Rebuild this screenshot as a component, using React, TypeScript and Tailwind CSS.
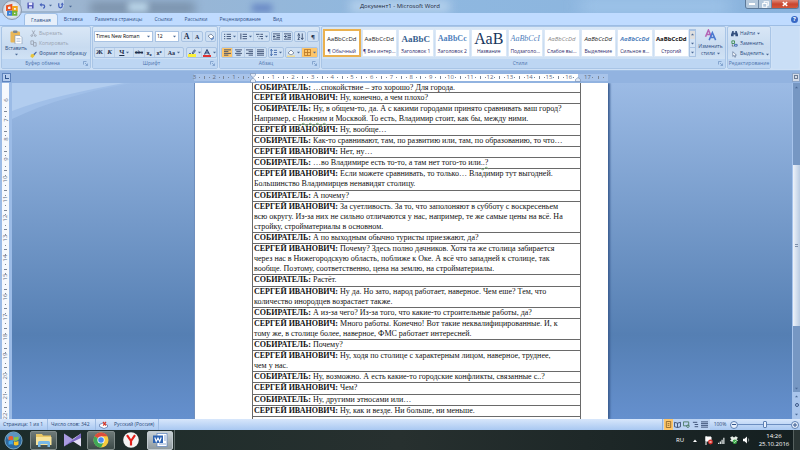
import type { ReactNode } from "react";
import clsx from "clsx";

type Row = { who: string; lines: ReactNode[]; loose?: boolean };

const A = "СОБИРАТЕЛЬ:";
const B = "СЕРГЕЙ ИВАНОВИЧ:";

const spell = "underline decoration-wavy decoration-[#7fb77f] decoration-1";

const rows: Row[] = [
  { who: A, lines: ["…спокойствие – это хорошо? Для города."] },
  { who: B, lines: ["Ну, конечно, а чем плохо?"] },
  {
    who: A,
    lines: [
      "Ну, в общем-то, да. А с какими городами принято сравнивать ваш город?",
      <>Например, с <span className={spell}>Нижним</span> и Москвой. То есть, Владимир стоит, как бы, между ними.</>,
    ],
  },
  { who: B, lines: ["Ну, вообще…"] },
  { who: A, lines: ["Как-то сравнивают, там, по развитию или, там, по образованию, то что…"] },
  { who: B, lines: ["Нет, ну…"] },
  { who: A, lines: [<>…во Владимире есть то-то, а там нет того-то или<span className={spell}>..?</span></>] },
  {
    who: B,
    lines: [
      "Если можете сравнивать, то только… Владимир тут выгодней.",
      "Большинство Владимирцев ненавидят столицу.",
    ],
    loose: true,
  },
  { who: A, lines: ["А почему?"] },
  {
    who: B,
    lines: [
      "За суетливость. За то, что заполоняют в субботу с воскресеньем",
      "всю округу. Из-за них не сильно отличаются у нас, например, те же самые цены на всё. На",
      "стройку, стройматериалы в основном.",
    ],
  },
  { who: A, lines: ["А по выходным обычно туристы приезжают, да?"] },
  {
    who: B,
    lines: [
      "Почему? Здесь полно дачников. Хотя та же столица забирается",
      "через нас в Нижегородскую область, поближе к Оке. А всё что западней к столице, так",
      "вообще. Поэтому, соответственно, цена на землю, на стройматериалы.",
    ],
  },
  { who: A, lines: ["Растёт."], loose: true },
  {
    who: B,
    lines: ["Ну да. Но зато, народ работает, наверное. Чем еше? Тем, что", "количество инородцев возрастает также."],
  },
  { who: A, lines: ["А из-за чего? Из-за того, что какие-то строительные работы, да?"] },
  {
    who: B,
    lines: [
      "Много работы. Конечно! Вот такие неквалифицированные. И, к",
      "тому же, в столице более, наверное, ФМС работает интересней.",
    ],
  },
  { who: A, lines: ["Почему?"] },
  {
    who: B,
    lines: ["Ну, ходя по столице с характерным лицом, наверное, труднее,", "чем у нас."],
  },
  { who: A, lines: ["Ну, возможно. А есть какие-то городские конфликты, связанные с..?"] },
  { who: B, lines: ["Чем?"], loose: true },
  { who: A, lines: ["Ну, другими этносами или…"] },
  { who: B, lines: ["Ну, как и везде. Ни больше, ни меньше."] },
];

const tabs = ["Главная", "Вставка", "Разметка страницы", "Ссылки", "Рассылки", "Рецензирование", "Вид"];

const styles = [
  { name: "¶ Обычный", sample: "AaBbCcDd", cls: "text-[6px] text-[#222]" },
  { name: "¶ Без интер...", sample: "AaBbCcDd", cls: "text-[6px] text-[#222]" },
  { name: "Заголовок 1", sample: "AaBbC", cls: "font-['Liberation_Serif'] font-bold text-[9px] text-[#37608f]" },
  { name: "Заголовок 2", sample: "AaBbCc", cls: "font-['Liberation_Serif'] font-bold text-[8px] text-[#4f81bd]" },
  { name: "Название", sample: "АаВ", cls: "font-['Liberation_Serif'] text-[16px] text-[#17365d]" },
  { name: "Подзаголо...", sample: "AaBbCcI", cls: "font-['Liberation_Serif'] italic text-[8px] text-[#4f81bd]" },
  { name: "Слабое вы...", sample: "AaBbCcDd", cls: "italic text-[6px] text-[#8a8a8a]" },
  { name: "Выделение", sample: "AaBbCcDd", cls: "italic text-[6px] text-[#222]" },
  { name: "Сильное в...", sample: "AaBbCcDd", cls: "italic font-bold text-[6px] text-[#4f81bd]" },
  { name: "Строгий", sample: "AaBbCcDd", cls: "font-bold text-[6px] text-[#111]" },
];

function Caret() {
  return (
    <svg viewBox="0 0 4 4" className="w-[3px] h-[3px] shrink-0" fill="#4b6a97">
      <path d="M0 1h4L2 3.4z" />
    </svg>
  );
}

function Group({ title, className, launcher = true, children }: { title: string; className?: string; launcher?: boolean; children: ReactNode }) {
  return (
    <section className={clsx("flex flex-col rounded-[2px] border border-[#a9c5e6] bg-linear-to-b from-[#d9e7f6] via-[#c8dbf0] to-[#d6e7f8]", className)}>
      <div className="flex-1 flex min-h-0">{children}</div>
      <div className="h-[9px] flex items-center bg-[#bdd6f3] text-[#4d74ad]">
        <h2 className="flex-1 text-center leading-[9px]">{title}</h2>
        {launcher && (
          <button aria-label={title} className="mr-[2px]">
            <svg viewBox="0 0 5 5" className="w-[5px] h-[5px]" fill="none" stroke="#6d90c0" strokeWidth=".7">
              <path d="M.5 3.5V.5h3M2 2l2.3 2.3M4.5 2.5v2h-2" />
            </svg>
          </button>
        )}
      </div>
    </section>
  );
}

function Bar({ className, children }: { className?: string; children: ReactNode }) {
  return (
    <div className={clsx("h-[11px] flex items-center rounded-[2px] border border-[#a9c3e3] bg-[#cfe0f3] divide-x divide-[#b9cfe9]", className)}>
      {children}
    </div>
  );
}

function Tool({ label, className, caret, active, children }: { label: string; className?: string; caret?: boolean; active?: boolean; children: ReactNode }) {
  return (
    <button
      aria-label={label}
      className={clsx("h-full flex-1 flex items-center justify-center gap-[2px] leading-none text-[#1e2f4d]", active && "bg-[#fdc66b]", className)}
    >
      {children}
      {caret && <Caret />}
    </button>
  );
}

function Lines({ d, color = "#33476b" }: { d: string; color?: string }) {
  return (
    <svg viewBox="0 0 8 8" className="w-[7px] h-[7px] shrink-0" fill="none" stroke={color} strokeWidth="1">
      <path d={d} />
    </svg>
  );
}

function TitleBar() {
  return (
    <header className="relative h-[13px] shrink-0 flex items-start bg-linear-to-r from-[#9fb4cc] via-[#8fb8e0] to-[#8ab3dd]">
      <div className="absolute inset-0 overflow-hidden">
        <div className="absolute left-[90px] top-[2px] w-[105px] h-[12px] bg-[#66798f] blur-[5px] opacity-60" />
        <div className="absolute left-[252px] top-[4px] w-[20px] h-[8px] bg-[#5675bd] blur-[3px] opacity-70" />
        <div className="absolute left-[128px] top-[2px] w-[20px] h-[10px] bg-[#b9d4e8] blur-[3px]" />
        <div className="absolute left-[350px] top-0 w-[100px] h-[13px] bg-[#b4d0ec] blur-[5px]" />
        <div className="absolute left-[580px] top-0 w-[150px] h-[13px] bg-[#a4c8ec] blur-[8px]" />
      </div>
      <div className="relative ml-[21px] h-[11px] w-[43px] pl-[6px] flex items-center gap-[5px] rounded-br-[6px] bg-[#bdd0e8]">
        <button aria-label="Сохранить">
          <svg viewBox="0 0 8 8" className="w-[7px] h-[7px]">
            <rect x=".5" y=".5" width="7" height="7" rx=".6" fill="#4b53b5" />
            <rect x="2" y=".6" width="4" height="3" fill="#eef" />
            <rect x="2.3" y="5" width="3.4" height="2.5" fill="#cfd6f4" />
          </svg>
        </button>
        <button aria-label="Отменить" className="flex items-center gap-[3px]">
          <svg viewBox="0 0 8 8" className="w-[7px] h-[7px]" fill="none" stroke="#4561ba" strokeWidth="1.4">
            <path d="M2 3.2h2.6a1.9 1.9 0 0 1 0 3.8" />
            <path d="M3 .8 .6 3.2 3 5.4z" fill="#4561ba" stroke="none" />
          </svg>
          <Caret />
        </button>
        <button aria-label="Повторить">
          <svg viewBox="0 0 8 8" className="w-[7px] h-[7px]" fill="none" stroke="#4561ba" strokeWidth="1.4">
            <path d="M2 1.5v3.2a2 2 0 0 0 4 0V2.5" />
            <path d="M4.2 3 6 .7 7.8 3z" fill="#4561ba" stroke="none" />
          </svg>
        </button>
      </div>
      <button aria-label="Настройка панели" className="relative ml-[5px] mt-[5px]">
        <Caret />
      </button>
      <h1 className="absolute inset-x-0 top-[1px] text-center text-[6px] leading-[11px] text-[#1d2a3a]">Документ1 - Microsoft Word</h1>
      <div className="relative ml-auto mr-[1px] h-[9px] flex rounded-b-[3px] overflow-hidden border border-t-0 border-[#5c7897] divide-x divide-[#6d88a6]">
        <button aria-label="Свернуть" className="w-[13px] flex items-center justify-center bg-[#b4c8dc]">
          <span className="w-[6px] h-[2px] bg-white" />
        </button>
        <button aria-label="Окно" className="w-[13px] flex items-center justify-center bg-[#b4c8dc]">
          <svg viewBox="0 0 8 8" className="w-[7px] h-[7px]" fill="none" stroke="#fff" strokeWidth="1.2">
            <path d="M2.5 2.5V.8h4.7v4H5.8M.8 2.8h4.6v4.4H.8z" />
          </svg>
        </button>
        <button aria-label="Закрыть" className="w-[26px] flex items-center justify-center bg-linear-to-b from-[#dd8a79] via-[#c9452f] to-[#d2573a]">
          <svg viewBox="0 0 8 8" className="w-[6px] h-[6px]" stroke="#fff" strokeWidth="1.8">
            <path d="m1 1.5 6 5M7 1.5l-6 5" />
          </svg>
        </button>
      </div>
      <button aria-label="Кнопка Office" className="absolute z-10 left-[2px] top-0 size-[20px] rounded-full border border-[#8a97ab] bg-radial from-white via-[#e3e8f0] to-[#a7b6cc] flex items-center justify-center">
        <svg viewBox="0 0 14 14" className="w-[14px] h-[14px]" fill="none" strokeWidth="1.9">
          <path d="M2 3.2 6.4 2v4.7L2 7z" stroke="#e8501f" />
          <path d="M8 4h3.8v3.7H8z" stroke="#f4a51d" />
          <path d="M3 8.8h3.4v3H3z" stroke="#3a7fd5" />
          <path d="M8 8.7h3.4v3.2H8z" stroke="#6eb43a" />
        </svg>
      </button>
    </header>
  );
}

function Ribbon() {
  return (
    <div className="shrink-0 bg-[#bfdbff] text-[5px]">
      <nav className="h-[12px] pl-[24px] pr-[2px] flex items-end text-[#2f4f85]">
        {tabs.map((t, i) => (
          <button key={t} className={clsx("h-[12px] px-[6px] leading-[12px] whitespace-nowrap", i === 0 && "rounded-t-[3px] border border-b-0 border-[#9fbfe6] bg-[#e6effa]")}>
            {t}
          </button>
        ))}
        <button aria-label="Справка" className="ml-auto mb-[2px] size-[7px] rounded-full bg-[#3767c4] text-white font-bold text-[6px] leading-[7px]">?</button>
      </nav>
      <div className="h-[46px] px-[1px] pb-[1px] flex gap-[1px] bg-[#cfe1f6] border-y border-[#9dbde4]">
        <Group title="Буфер обмена" className="w-[90px]">
          <button className="w-[28px] pt-[3px] flex flex-col items-center text-[#2b4b80]">
            <svg viewBox="0 0 14 14" className="w-[14px] h-[14px]">
              <rect x="1.5" y="1.5" width="9.5" height="11" rx="1" fill="#e9b758" />
              <rect x="4" y=".5" width="4.5" height="2.4" rx="1" fill="#7b8794" />
              <path d="M6 5.5h5l2 2V14H6z" fill="#fff" stroke="#7d93b3" strokeWidth=".6" />
              <path d="M7.5 8.5h4M7.5 10h4M7.5 11.5h4" stroke="#9db2d0" strokeWidth=".6" />
            </svg>
            <span className="leading-[9px]">Вставить</span>
            <Caret />
          </button>
          <div className="pt-[2px] flex flex-col text-[#9aa4b2]">
            <button disabled className="h-[10px] flex items-center gap-[2px]">
              <Lines d="M2.5.5 5 5.2M5.5.5 3 5.2M2 5.5a1 1 0 1 0 .1 0M6 5.5a1 1 0 1 0 .1 0" color="#9aa4b2" />
              Вырезать
            </button>
            <button disabled className="h-[11px] flex items-center gap-[2px]">
              <Lines d="M1 1h3v4H1zM4 3h3v4H4z" color="#9aa4b2" />
              Копировать
            </button>
            <button className="h-[10px] flex items-center gap-[2px] text-[#2b4b80] whitespace-nowrap">
              <svg viewBox="0 0 8 8" className="w-[7px] h-[7px]">
                <path d="M1 4 4 3l1.5 2L3 8 .5 6.5z" fill="#e8c43c" />
                <path d="M4 3.5 7 .6l.8.8L5 4.8z" fill="#4263a5" />
              </svg>
              Формат по образцу
            </button>
          </div>
        </Group>

        <Group title="Шрифт" className="w-[126px]">
          <div className="flex-1 px-[1px] pt-[4px] flex flex-col gap-[5px]">
            <div className="flex gap-[2px]">
              <div className="w-[59px] h-[11px] flex items-center pr-[2px] border border-[#a9c3e3] bg-white">
                <input aria-label="Шрифт" defaultValue="Times New Roman" className="w-full min-w-0 pl-[1px] leading-[9px] text-black outline-none" />
                <Caret />
              </div>
              <div className="w-[24px] h-[11px] flex items-center pr-[2px] border border-[#a9c3e3] bg-white">
                <input aria-label="Размер шрифта" defaultValue="12" className="w-full min-w-0 pl-[1px] leading-[9px] text-black outline-none" />
                <Caret />
              </div>
              <Bar className="w-[22px]">
                <Tool label="Увеличить размер"><span className="font-['Liberation_Serif'] font-bold text-[8px]">A</span></Tool>
                <Tool label="Уменьшить размер"><span className="font-['Liberation_Serif'] font-bold text-[6px]">A</span></Tool>
              </Bar>
              <Bar className="w-[11px]">
                <Tool label="Очистить формат">
                  <svg viewBox="0 0 8 8" className="w-[8px] h-[8px]">
                    <path d="m1 3 3-2 3 3-3 2z" fill="#fff" stroke="#5d6d88" strokeWidth=".7" />
                    <path d="m4 6 3-2v1.5L4.5 7.5z" fill="#5f86c5" />
                  </svg>
                </Tool>
              </Bar>
            </div>
            <div className="flex gap-[2px]">
              <Bar className="w-[90px] font-['Liberation_Serif'] text-[7px]">
                <Tool label="Полужирный"><b>Ж</b></Tool>
                <Tool label="Курсив"><b className="italic">К</b></Tool>
                <Tool label="Подчеркнутый" caret className="grow-[2]"><b className="underline">Ч</b></Tool>
                <Tool label="Зачеркнутый"><s className="font-['Roboto'] text-[5px]">abc</s></Tool>
                <Tool label="Подстрочный"><b className="font-['Roboto'] text-[6px]">x₂</b></Tool>
                <Tool label="Надстрочный"><b className="font-['Roboto'] text-[6px]">x²</b></Tool>
                <Tool label="Регистр" caret className="grow-[2]"><b className="text-[6px]">Aa</b></Tool>
              </Bar>
              <Bar className="w-[31px]">
                <Tool label="Выделение цветом" caret>
                  <svg viewBox="0 0 8 8" className="w-[8px] h-[8px]">
                    <rect y="5" width="8" height="3" fill="#fbf03a" />
                    <path d="M1 4.5h2M4 4 6.5.8l1 .8L5 5z" stroke="#42597f" strokeWidth=".8" fill="#8ba2c6" />
                  </svg>
                </Tool>
                <Tool label="Цвет текста" caret>
                  <svg viewBox="0 0 8 8" className="w-[8px] h-[8px]">
                    <rect y="6" width="8" height="2" fill="#e03131" />
                    <path d="M1.5 5.5 4 .8l2.5 4.7M2.5 4h3" stroke="#2e4576" strokeWidth="1.1" fill="none" />
                  </svg>
                </Tool>
              </Bar>
            </div>
          </div>
        </Group>

        <Group title="Абзац" className="w-[101px]">
          <div className="flex-1 px-[1px] pt-[4px] flex flex-col gap-[5px]">
            <div className="flex gap-[1px]">
              <Bar className="w-[49px]">
                <Tool label="Маркеры" caret><Lines d="M0 1.5h1.4M3 1.5h5M0 4h1.4M3 4h5M0 6.5h1.4M3 6.5h5" /></Tool>
                <Tool label="Нумерация" caret><Lines d="M1 .5v6.8M3 1.5h5M3 4h5M3 6.5h5" /></Tool>
                <Tool label="Многоуровневый список" caret><Lines d="M0 1.5h4M5 1.5h3M1.5 4h1M4 4h4M3 6.5h1M5.5 6.5H8" /></Tool>
              </Bar>
              <Bar className="w-[22px]">
                <Tool label="Уменьшить отступ"><Lines d="M0 1h8M4 3h4M4 5h4M0 7h8M3 4H0M1.5 2.5 0 4l1.5 1.5" /></Tool>
                <Tool label="Увеличить отступ"><Lines d="M0 1h8M4 3h4M4 5h4M0 7h8M0 4h3M1.5 2.5 3 4 1.5 5.5" /></Tool>
              </Bar>
              <Bar className="w-[12px]">
                <Tool label="Сортировка"><Lines d="M1 3.5 2 .5l1 3M1 4.5h2L1 7.5h2M6 .5v7M4.5 5.5 6 7.4l1.5-1.9" /></Tool>
              </Bar>
              <Bar className="w-[12px]"><Tool label="Отобразить знаки"><b className="text-[6px]">¶</b></Tool></Bar>
            </div>
            <div className="flex gap-[1px]">
              <Bar className="w-[46px]">
                <Tool label="По левому краю" active><Lines d="M0 1h8M0 3h5M0 5h8M0 7h5" /></Tool>
                <Tool label="По центру"><Lines d="M0 1h8M1.5 3h5M0 5h8M1.5 7h5" /></Tool>
                <Tool label="По правому краю"><Lines d="M0 1h8M3 3h5M0 5h8M3 7h5" /></Tool>
                <Tool label="По ширине"><Lines d="M0 1h8M0 3h8M0 5h8M0 7h8" /></Tool>
              </Bar>
              <Bar className="w-[16px]">
                <Tool label="Интервал" caret><Lines d="M1.5 0v8M0 2 1.5.4 3 2M0 6l1.5 1.6L3 6M4.5 1.5H8M4.5 4H8M4.5 6.5H8" color="#3c63a8" /></Tool>
              </Bar>
              <Bar className="w-[33px]">
                <Tool label="Заливка" caret>
                  <svg viewBox="0 0 8 8" className="w-[8px] h-[8px]">
                    <path d="m1 4 3-3 3 3-3 2z" fill="#fff" stroke="#5d6d88" strokeWidth=".7" />
                    <rect y="6.5" width="8" height="1.5" fill="#f0dc95" />
                  </svg>
                </Tool>
                <Tool label="Границы" caret active><Lines d="M.5.5h7v7h-7zM4 .5v7M.5 4h7" color="#b7782a" /></Tool>
              </Bar>
            </div>
          </div>
        </Group>

        <Group title="Стили" className="flex-1 min-w-0">
          <div className="flex-1 min-w-0 py-[2px] pl-[1px] flex">
            <div className="flex-1 min-w-0 flex gap-[1px]">
              {styles.map((s, i) => (
                <button
                  key={s.name}
                  className={clsx("flex-1 min-w-0 flex flex-col overflow-hidden bg-white border", i === 0 ? "border-2 border-[#eab150] pt-0" : "border-[#dbe8f7] pt-[1px]")}
                >
                  <span className={clsx("h-[16px] w-full flex items-center justify-center whitespace-nowrap leading-none", s.cls)}>{s.sample}</span>
                  <span className="w-full flex justify-center whitespace-nowrap leading-[8px] text-[#2c2c6c]">{s.name}</span>
                </button>
              ))}
            </div>
            <div className="w-[7px] flex flex-col divide-y divide-[#a9c3e3] border border-[#a9c3e3] bg-[#d3e3f5]">
              <button aria-label="Вверх" className="flex-1 flex items-center justify-center rotate-180 bg-[#dedede]"><Caret /></button>
              <button aria-label="Вниз" className="flex-1 flex items-center justify-center"><Caret /></button>
              <button aria-label="Дополнительно" className="flex-1 flex items-center justify-center"><Caret /></button>
            </div>
            <button className="w-[29px] flex flex-col items-center text-[#2b4b80]">
              <svg viewBox="0 0 14 14" className="w-[13px] h-[14px]" fill="none" strokeWidth="1.8">
                <path d="M1.2 9 4.6 1.2 8 9M2.4 6.5h4.4" stroke="#b565b5" />
                <path d="M5.4 13 9.2 4.2 13 13M6.8 10h4.8" stroke="#4a78cf" />
              </svg>
              <span className="mt-[2px] leading-[7px]">Изменить</span>
              <span className="leading-[7px] flex items-center gap-[2px]">стили<Caret /></span>
            </button>
          </div>
        </Group>

        <Group title="Редактирование" launcher={false} className="w-[44px]">
          <div className="pt-[2px] pl-[3px] flex flex-col text-[#2b4b80]">
            <button className="h-[10px] flex items-center gap-[2px]">
              <svg viewBox="0 0 8 8" className="w-[7px] h-[7px]" fill="#34507f">
                <path d="M1.5 1h1.6v2h1.8V1h1.6L8 5v2H5V5H3v2H0V5z" />
              </svg>
              Найти <Caret />
            </button>
            <button className="h-[11px] flex items-center gap-[2px]">
              <svg viewBox="0 0 8 8" className="w-[7px] h-[7px]" fill="none">
                <path d="M1 4V1h3v3z" stroke="#3a8a4d" /><path d="M4 7V5h3v2z" stroke="#3a62ad" /><path d="M1.5 5v2H3" stroke="#444" strokeWidth=".7" />
              </svg>
              Заменить
            </button>
            <button className="h-[10px] flex items-center gap-[2px]">
              <svg viewBox="0 0 8 8" className="w-[7px] h-[7px]" fill="#fff" stroke="#53698f" strokeWidth=".7">
                <path d="M2 .8v5.4l1.4-1.2 1 2.2 1-.5-1-2.1h1.8z" />
              </svg>
              Выделить <Caret />
            </button>
          </div>
        </Group>
        <div className="w-[27px] rounded-[2px] bg-[#c9def6]" />
      </div>
    </div>
  );
}

function Cell({ n, half }: { n: string | number; half?: boolean }) {
  return (
    <div className={clsx("basis-0 min-w-0 flex items-center justify-between", half ? "grow" : "grow-2")}>
      <span className="w-px flex justify-center">{n}</span>
      <span className="w-px h-px bg-[#7c8797]" />
      {!half && <span className="w-px h-[3px] bg-[#7c8797]" />}
      {!half && <span className="w-px h-px bg-[#7c8797]" />}
      <span />
    </div>
  );
}

function Rulers() {
  return (
    <div className="h-[12px] shrink-0 flex items-center bg-[#92b3e0]">
      <button aria-label="Табуляция" className="ml-[2px] size-[9px] border border-[#5e84bd] bg-[#b5cdee] flex items-center justify-center">
        <span className="w-[4px] h-[4px] border-l border-b border-[#31568f]" />
      </button>
      <div className="flex-1 flex justify-center pr-[1px]">
        <div className="relative w-[414px] h-[7px] flex text-[6px] leading-[7px] text-[#5d6a7e]">
          <div className="w-[59px] flex bg-[#a9c4ea]">
            {[3, 2, 1].map((n) => <Cell key={n} n={n} />)}
          </div>
          <div className="w-[325px] flex bg-white">
            {Array.from({ length: 17 }, (_, i) => <Cell key={i} n={i || ""} half={i === 16} />)}
          </div>
          <div className="flex-1 pl-[9px] flex bg-[#a9c4ea]">
            <Cell n={17} />
          </div>
          <svg viewBox="0 0 6 10" className="absolute left-[56px] top-[-1px] w-[6px] h-[10px]" fill="#dfe9f7" stroke="#6b86ad" strokeWidth=".6">
            <path d="M.5.5h5v1.8L3 4.6.5 2.3zM3 5l2.5 2v2.5h-5V7z" />
          </svg>
          <svg viewBox="0 0 6 5" className="absolute left-[381px] top-[3px] w-[6px] h-[5px]" fill="#dfe9f7" stroke="#6b86ad" strokeWidth=".6">
            <path d="m3 .5 2.5 2v2h-5v-2z" />
          </svg>
        </div>
      </div>
      <button aria-label="Линейка" className="w-[8px] h-[9px] border border-[#8ba5c8] bg-[#d5dce8] flex items-center justify-center">
        <span className="size-[4px] border border-[#6d7d96]" />
      </button>
    </div>
  );
}

function Workspace() {
  return (
    <div className="relative flex-1 min-h-0 overflow-hidden flex bg-linear-to-b from-[#9cbbe5] via-[#557fb3] via-75% to-[#6590ce]">
      <svg viewBox="0 0 120 36" className="absolute left-[12px] top-0 w-[120px] h-[36px]">
        <path d="M0 0h120C75 8 35 19 0 36z" fill="#a0bfe8" />
        <path d="M0 0h112C70 8 30 16 0 28z" fill="#b2cdef" />
      </svg>
      <div className="relative w-[12px] pl-[2px] bg-[#9bbbe6] overflow-hidden">
        <div className="w-[7px] h-full pt-[14px] flex flex-col items-center bg-[#f6f9fd] text-[6px] text-[#5d6a7e]">
          {Array.from({ length: 17 }, (_, i) => (
            <div key={i} className={clsx("basis-0 min-h-0 flex flex-col items-center justify-between leading-[6px]", i === 16 ? "grow" : "grow-3")}>
              <span className="-rotate-90 h-[6px]">{i + 6}</span>
              {i < 16 && <span className="h-px w-px bg-[#7c8797]" />}
              {i < 16 && <span className="h-px w-[3px] bg-[#7c8797]" />}
              {i < 16 && <span className="h-px w-px bg-[#7c8797]" />}
            </div>
          ))}
        </div>
      </div>
      <main className="relative flex-1 min-w-0 flex justify-center pr-[2px]">
        <div className="w-[414px] pl-[57px] pr-[27px] bg-white border-l border-[#6f8fbd] shadow-[2px_0_2px_#3d5f92]">
          <table className="w-full border-collapse font-['Liberation_Serif',serif] text-[8px] text-[#111]">
            <tbody>
              {rows.map((r, i) => (
                <tr key={i}>
                  <td
                    className={clsx(
                      "px-[1px] border border-[#6a6a6a] whitespace-nowrap",
                      i === 0 ? "border-t-0 leading-[9px]" : "leading-[10px]",
                      r.loose && "pb-[1px]",
                    )}
                  >
                    {r.lines.map((line, j) => (
                      <p key={j}>
                        {j === 0 && <b>{r.who} </b>}
                        {line}
                      </p>
                    ))}
                  </td>
                </tr>
              ))}
              <tr>
                <td className="h-[12px] border-x border-[#6a6a6a]" />
              </tr>
            </tbody>
          </table>
        </div>
      </main>
      <div className="relative w-[8px] flex flex-col items-center bg-[#7697c3] border-l border-[#a7c4ec]">
        <button aria-label="Прокрутить вверх" className="h-[9px] flex items-center rotate-180"><Caret /></button>
        <div className="grow-[73] basis-0" />
        <div className="grow-[162] basis-0 w-full flex flex-col items-center justify-center gap-px bg-linear-to-r from-[#eef3fa] to-[#b9cbe2]">
          <span className="w-[3px] h-px bg-[#7d90ab]" />
          <span className="w-[3px] h-px bg-[#7d90ab]" />
        </div>
        <div className="grow-[58] basis-0" />
        <button aria-label="Прокрутить вниз" className="h-[8px] flex items-center"><Caret /></button>
        <div className="h-[27px] w-full flex flex-col items-center justify-around bg-[#a9c5ec]">
          <button aria-label="Назад" className="rotate-180"><Caret /></button>
          <button aria-label="Объект перехода" className="size-[4px] rounded-full border border-[#3c5888]" />
          <button aria-label="Далее"><Caret /></button>
        </div>
      </div>
    </div>
  );
}

function StatusBar() {
  return (
    <footer className="h-[11px] shrink-0 flex items-center bg-linear-to-b from-[#d8e7fb] to-[#a9c8f1] text-[5px] leading-[11px] text-[#2a4878]">
      <span className="w-[48px] pl-[3px] whitespace-nowrap border-r border-[#9dbbe3]">Страница: 1 из 1</span>
      <span className="w-[48px] pl-[3px] whitespace-nowrap border-r border-[#9dbbe3]">Число слов: 342</span>
      <button aria-label="Правописание" className="w-[15px] flex justify-center">
        <svg viewBox="0 0 9 8" className="w-[9px] h-[8px]">
          <path d="M.5 3.5 4 2l4.5 2v2L5 7.5.5 5.5z" fill="#fff" stroke="#5270a6" strokeWidth=".7" />
          <path d="m4 1 3 3.5M7 .8 4.2 4.6" stroke="#d93a2b" strokeWidth="1.2" />
        </svg>
      </button>
      <button className="w-[48px] pl-[3px] text-left whitespace-nowrap border-r border-[#9dbbe3]">Русский (Россия)</button>
      <div className="ml-auto w-[48px] h-full px-[1px] flex items-center bg-[#bcd3f2] border-l border-[#8fb0de]">
        <Tool label="Разметка страницы" active><Lines d="M1.5 .5h5v7h-5zM3 3h2M3 5h2" color="#8a6429" /></Tool>
        <Tool label="Режим чтения"><Lines d="M.5 1.5 4 2.5l3.5-1v5L4 7.5.5 6.5zM4 2.5v5" /></Tool>
        <Tool label="Веб-документ"><Lines d="M.5 1h6v4.5h-6zM5.5 4.5a1.5 1.5 0 1 0 .1 0" color="#47785f" /></Tool>
        <Tool label="Структура"><Lines d="M1 1.5h5M3 4h4M3 6.5h4" /></Tool>
        <Tool label="Черновик"><Lines d="M0 1h8M0 3h8M0 5h8M0 7h8" /></Tool>
      </div>
      <button className="w-[20px] text-center">100%</button>
      <button aria-label="Уменьшить" className="size-[8px] rounded-full border border-[#5d80b3] bg-[#e8f0fb] flex items-center justify-center">
        <span className="w-[4px] h-px bg-[#34568d]" />
      </button>
      <input
        type="range"
        aria-label="Масштаб"
        defaultValue={50}
        className="w-[53px] h-[8px] appearance-none bg-transparent [&::-webkit-slider-runnable-track]:h-px [&::-webkit-slider-runnable-track]:bg-[#6d8fc1] [&::-webkit-slider-thumb]:appearance-none [&::-webkit-slider-thumb]:-mt-[3px] [&::-webkit-slider-thumb]:h-[7px] [&::-webkit-slider-thumb]:w-[4px] [&::-webkit-slider-thumb]:rounded-[1px] [&::-webkit-slider-thumb]:border [&::-webkit-slider-thumb]:border-[#5d80b3] [&::-webkit-slider-thumb]:bg-[#e8f0fb]"
      />
      <button aria-label="Увеличить" className="size-[8px] mr-[1px] rounded-full border border-[#5d80b3] bg-[#e8f0fb] flex items-center justify-center">
        <svg viewBox="0 0 4 4" className="w-[4px] h-[4px]" stroke="#34568d"><path d="M0 2h4M2 0v4" /></svg>
      </button>
    </footer>
  );
}

function Taskbar() {
  const lit = "border border-[#7f8a88] bg-linear-to-b from-[#6e7a78] to-[#3c4a48] rounded-[2px]";
  return (
    <div className="h-[20px] shrink-0 flex items-center bg-linear-to-r from-[#1c2c2a] via-[#27302f] to-[#141f20] text-white">
      <button aria-label="Пуск" className="w-[30px] flex justify-center pr-[3px]">
        <svg viewBox="0 0 20 20" className="w-[19px] h-[19px]">
          <circle cx="10" cy="10" r="9" fill="#2d6a9f" stroke="#7fb0cf" />
          <ellipse cx="10" cy="6" rx="7" ry="4.5" fill="#7fb3d8" opacity=".6" />
          <path d="M4.8 6.2q2.3-1.4 4.6-.4v3.8q-2.3-1-4.6.3z" fill="#ee5a2b" />
          <path d="M10.4 6.2q2.3 1 4.8-.4v3.8q-2.5 1.3-4.8.3z" fill="#8cc63e" />
          <path d="M4.8 10.8q2.3-1.3 4.6-.3v3.8q-2.3-1-4.6.3z" fill="#3fa5e8" />
          <path d="M10.4 10.9q2.3 1 4.8-.3v3.8q-2.5 1.3-4.8.3z" fill="#fcc521" />
        </svg>
      </button>
      <button aria-label="Проводник" className={clsx("w-[27px] h-[19px] flex items-center justify-center", lit)}>
        <svg viewBox="0 0 18 16" className="w-[18px] h-[16px]">
          <path d="M1 2h6l1 1.5h8V13H1z" fill="#e9c766" />
          <path d="M1 5h15.5v8H1z" fill="#f8e49b" />
          <path d="M3 10.5q0-1.5 1.5-1.5h9q1.5 0 1.5 1.5V15h-2.5v-3h-7v3H3z" fill="#78b9e6" />
        </svg>
      </button>
      <button aria-label="KMPlayer" className="w-[30px] flex justify-center">
        <svg viewBox="0 0 18 14" className="w-[17px] h-[14px]">
          <path d="M0 0 9 6v2L0 14z" fill="#a99be0" />
          <path d="M18 0 9 6v2l9 6z" fill="#e4dff6" />
          <path d="M0 14 18 0v5L5 11z" fill="#7d69c6" />
        </svg>
      </button>
      <button aria-label="Chrome" className={clsx("w-[28px] h-[19px] flex items-center justify-center", lit)}>
        <svg viewBox="0 0 16 16" className="w-[16px] h-[16px]">
          <circle cx="8" cy="8" r="7.5" fill="#f7cb3d" />
          <path d="M8 8 1.5 4.25A7.5 7.5 0 0 1 14.5 4.25H8z" fill="#dd4b3e" />
          <path d="M8 8 1.5 4.25A7.5 7.5 0 0 0 8 15.5l3-6z" fill="#3fa757" />
          <circle cx="8" cy="8" r="3.6" fill="#fff" />
          <circle cx="8" cy="8" r="2.8" fill="#4688f1" />
        </svg>
      </button>
      <button aria-label="Яндекс" className="w-[32px] flex justify-center">
        <svg viewBox="0 0 16 16" className="w-[16px] h-[16px]">
          <circle cx="8" cy="8" r="7.8" fill="#f4f4f4" />
          <path d="M4 3.2 8 9v4.5M12 3.2 8 9" fill="none" stroke="#e3201b" strokeWidth="2.2" />
        </svg>
      </button>
      <button aria-label="Word" className="w-[26px] h-[19px] flex items-center justify-center rounded-[2px] border border-[#c2cbcf] bg-linear-to-b from-[#c8d0d4] to-[#8f9a9f]">
        <svg viewBox="0 0 15 14" className="w-[15px] h-[14px]">
          <rect x="4" y=".5" width="10" height="13" fill="#fff" stroke="#5c84bf" strokeWidth=".7" />
          <path d="M11 3h2M11 5h2M6 11h7M11 7h2" stroke="#6e93c9" strokeWidth=".8" />
          <rect y="2.5" width="10" height="7.5" fill="#2d63b3" />
          <path d="m1.8 4.5 1.4 4L5 5l1.7 3.5 1.5-4" fill="none" stroke="#fff" strokeWidth="1.1" />
        </svg>
      </button>
      <div className="w-px h-full ml-px bg-[#5d6968]" />
      <div className="ml-auto flex items-center text-[6px]">
        <button className="w-[17px] text-left">RU</button>
        <button aria-label="Скрытые значки" className="w-[12px]">
          <svg viewBox="0 0 4 3" className="w-[4px] h-[3px]" fill="#fff"><path d="M0 3h4L2 .5z" /></svg>
        </button>
        <button aria-label="Центр поддержки" className="w-[13px]">
          <svg viewBox="0 0 8 9" className="w-[8px] h-[9px]">
            <path d="M1 0v9M1 1h5v4H1z" fill="#fff" stroke="#fff" />
            <circle cx="5.5" cy="6" r="2.4" fill="#d9302a" />
            <path d="m4.6 5.1 1.8 1.8M6.4 5.1 4.6 6.9" stroke="#fff" strokeWidth=".7" />
          </svg>
        </button>
        <button aria-label="Сеть" className="w-[12px]">
          <svg viewBox="0 0 8 8" className="w-[7px] h-[7px]" fill="#dfe5e5">
            <path d="M0 8V6.5h1.4V8zM2 8V5h1.4v3zM4 8V3h1.4v5zM6 8V.8h1.4V8z" />
          </svg>
        </button>
        <button aria-label="Dropbox" className="w-[13px]">
          <svg viewBox="0 0 8 8" className="w-[8px] h-[8px]">
            <path d="M2.2.3 4 1.6 5.8.3 8 1.8 6.5 3.2 8 4.6 5.8 6 4 4.8 2.2 6 0 4.6l1.5-1.4L0 1.8z" fill="#e9efe9" />
            <circle cx="4.8" cy="5.7" r="2.2" fill="#39a845" />
            <path d="m3.8 5.7.8.8 1.2-1.5" fill="none" stroke="#fff" strokeWidth=".7" />
          </svg>
        </button>
        <button aria-label="Громкость" className="w-[13px]">
          <svg viewBox="0 0 8 8" className="w-[7px] h-[8px]" fill="#fff">
            <path d="M0 2.5h1.8L4.5 0v8L1.8 5.5H0z" />
            <path d="M6 2.2q1.2 1.8 0 3.6" fill="none" stroke="#cfd6d6" strokeWidth=".7" />
          </svg>
        </button>
        <time className="w-[36px] text-center leading-[8px]">
          14:26
          <br />
          25.10.2016
        </time>
        <button aria-label="Показать рабочий стол" className="ml-px w-[7px] h-[20px] border-l border-[#56615f] bg-[#2a3534]" />
      </div>
    </div>
  );
}

export default function App() {
  return (
    <div className="h-screen flex flex-col overflow-hidden font-['Open_Sans',sans-serif] bg-[#8db2e3]">
      <TitleBar />
      <Ribbon />
      <Rulers />
      <Workspace />
      <StatusBar />
      <Taskbar />
    </div>
  );
}
